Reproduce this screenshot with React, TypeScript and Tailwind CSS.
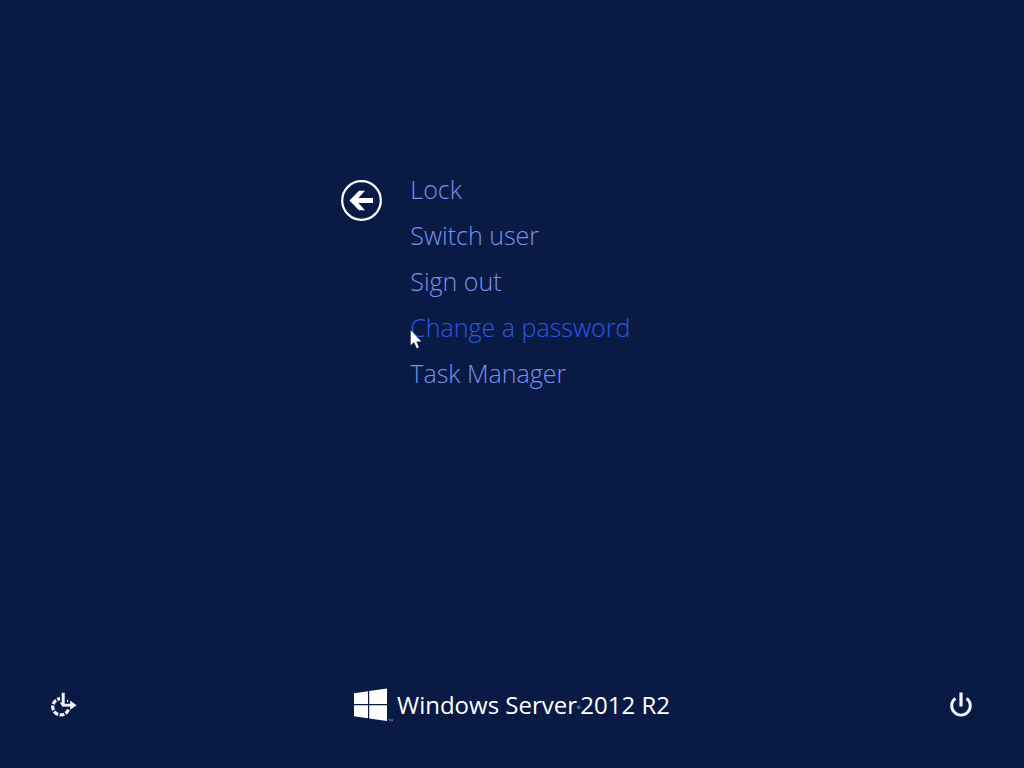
import React from 'react';

const actions = [
  { id: 'lock', label: 'Lock' },
  { id: 'switch-user', label: 'Switch user' },
  { id: 'sign-out', label: 'Sign out' },
  { id: 'change-password', label: 'Change a password' },
  { id: 'task-manager', label: 'Task Manager' },
];

function BackIcon() {
  return (
    <svg viewBox="0 0 42 42" className="h-[42px] w-[42px]" aria-hidden="true">
      <circle cx="20.5" cy="20.5" r="19.3" fill="none" stroke="#fff" strokeWidth="2.2" />
      <path d="M8.5 20.5 18 10.8h6l-6.6 7.2H32v5H17.4l6.6 7.2h-6z" fill="#fff" />
    </svg>
  );
}

function EaseOfAccessIcon() {
  return (
    <svg viewBox="0 0 28 28" className="h-7 w-7" fill="none" stroke="#f4f6ff" aria-hidden="true">
      {/* dashed ring, opened at the top and right for the two arrows */}
      <circle cx="11.8" cy="15.8" r="8.1" strokeWidth="3.2" pathLength="56" strokeDasharray="5.4 1.6" strokeDashoffset="-3" />
      <path d="M11 4h7v8h-7zM17 11.2h7v6.4h-7z" fill="#091a45" stroke="none" />
      <path d="M14.2 1.8v13.2" strokeWidth="3" />
      <path d="M10.8 11.4h3.4v4.8z" fill="#f4f6ff" stroke="none" />
      <path d="M13.4 14.2H23" strokeWidth="2.8" />
      <path d="M21.2 9.6 27.6 14.2l-6.4 4.6z" fill="#f4f6ff" stroke="none" />
    </svg>
  );
}

function PowerIcon() {
  return (
    <svg viewBox="0 0 28 28" className="h-7 w-7" fill="none" stroke="#f4f6ff" strokeWidth="2.9" aria-hidden="true">
      <path d="M8.4 7.4a9.3 9.3 0 1 0 11.2 0" />
      <path d="M14 1.5v14" strokeWidth="3.2" />
    </svg>
  );
}

function WindowsLogo() {
  return (
    <svg viewBox="0 0 39 34" className="h-[34px] w-[39px]" fill="#fff" aria-hidden="true">
      <path d="M0 5.2 14 3.2v12.9H0zM15.2 3 33 .5v15.6H15.2zM0 17.3h14v12.9L0 28.2zM15.2 17.3H33v15.6l-17.8-2.5z" />
      <path d="M34.5 31.5h1.8M35.4 31.5v1.8M37 33.3v-1.8l.7 1 .7-1v1.8" fill="none" stroke="#aab4d6" strokeWidth=".5" />
    </svg>
  );
}

function Cursor() {
  return (
    <svg viewBox="0 0 12 20" className="pointer-events-none absolute left-0 top-[25px] h-5 w-3" aria-hidden="true">
      <path d="M.5.8v15.8l3.5-3.2 2.6 6 2.5-1-2.4-5.6h4.9z" fill="#fff" stroke="#06102c" strokeWidth=".4" />
    </svg>
  );
}

export default function App() {
  return (
    <div className="flex min-h-screen flex-col bg-[#091a45] font-['Open_Sans','Noto_Sans',sans-serif]">
      <main className="grid flex-1 grid-cols-3 content-start pt-[166px]">
        <div className="col-span-2 col-start-2 flex items-start gap-[27px]">
          <button type="button" aria-label="Back" className="mt-[14px]">
            <BackIcon />
          </button>
          <ul>
            {actions.map((action) => {
              const hovered = action.id === 'change-password';
              return (
                <li key={action.id} className="relative">
                  <button
                    type="button"
                    className={`block h-[46px] whitespace-nowrap text-[25px] leading-[46px] font-light ${
                      hovered ? 'text-[#2a58e6]' : 'text-[#7a92ee]'
                    }`}
                  >
                    {action.label}
                  </button>
                  {hovered && <Cursor />}
                </li>
              );
            })}
          </ul>
        </div>
      </main>

      <footer className="flex items-center justify-between px-[49px] pb-[45px]">
        <button type="button" aria-label="Ease of access">
          <EaseOfAccessIcon />
        </button>
        <div className="flex items-center gap-1 text-2xl leading-9 whitespace-nowrap text-white">
          <WindowsLogo />
          <span>
            Windows Server
            <span className="align-middle text-[4px] leading-none">®</span>
            2012 R2
          </span>
        </div>
        <button type="button" aria-label="Power">
          <PowerIcon />
        </button>
      </footer>
    </div>
  );
}
